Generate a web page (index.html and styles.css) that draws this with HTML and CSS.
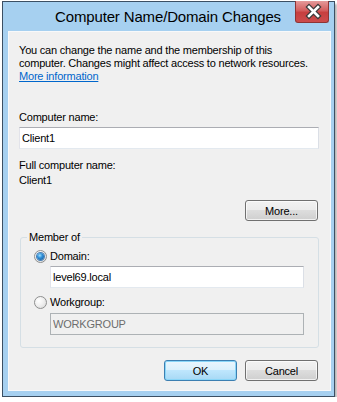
FILE: index.html
```html
<!DOCTYPE html>
<html lang="en">
<head>
  <meta charset="UTF-8" />
  <title>Computer Name/Domain Changes</title>
  <link rel="stylesheet" href="styles.css">
</head>
<body>

  <div class="window">
    <div class="titlebar">
      <span class="title">Computer Name/Domain Changes</span>
      <button class="close-btn" aria-label="Close">
        <svg width="34" height="21" viewBox="0 0 34 21">
          <path d="M13 6 L22 15 M22 6 L13 15" stroke="#3a3a3a" stroke-width="5" stroke-linecap="square" fill="none"/>
          <path d="M13 6 L22 15 M22 6 L13 15" stroke="#fff" stroke-width="2.6" stroke-linecap="square" fill="none"/>
        </svg>
      </button>
    </div>

    <div class="client">
      <p class="intro">
        You can change the name and the membership of this<br>
        computer. Changes might affect access to network resources.<br>
        <a href="#">More information</a>
      </p>

      <label class="field-label name-label">Computer name:</label>
      <input class="text-input" type="text" value="Client1" />

      <div class="field-label full-label">Full computer name:</div>
      <div class="field-label">Client1</div>

      <div class="more-row">
        <button class="btn">More...</button>
      </div>

      <fieldset class="member">
        <legend>Member of</legend>
        <label class="radio-row"><span class="radio checked"></span>Domain:</label>
        <input class="text-input indent" type="text" value="level69.local" />
        <label class="radio-row second"><span class="radio"></span>Workgroup:</label>
        <input class="text-input indent last" type="text" value="WORKGROUP" disabled />
      </fieldset>

      <div class="actions">
        <button class="btn btn-default">OK</button>
        <button class="btn">Cancel</button>
      </div>
    </div>
  </div>

</body>
</html>
```

FILE: styles.css
```css
* {
  box-sizing: border-box;
}

body {
  margin: 0;
  background-color: #fff;
  font-family: "Liberation Sans", Arial, sans-serif;
  font-size: 11px;
  letter-spacing: -0.2px;
  color: #000;
}

.window {
  width: 333px;
  height: 396px;
  margin: 1px 0 0 2px;
  border: 1px solid #3b4f63;
  background-color: #a6d0f0;
  padding: 0 3px 5px 5px;
  display: flex;
  flex-direction: column;
  box-shadow: 2px 3px 2px rgba(0, 0, 0, 0.3);
}

.titlebar {
  position: relative;
  height: 29px;
  flex: none;
  text-align: center;
  padding-right: 3px;
}

.title {
  font-size: 15px;
  letter-spacing: -0.15px;
  line-height: 30px;
}

.close-btn {
  position: absolute;
  top: -1px;
  right: 2px;
  width: 34px;
  height: 22px;
  padding: 0;
  border: 1px solid #8e3434;
  border-top: none;
  border-radius: 0 0 3px 3px;
  background: linear-gradient(#e49a9a 0%, #d45e5e 45%, #c73f3f 55%, #cc4c4c 100%);
}

.close-btn svg {
  display: block;
}

.client {
  flex: 1;
  background-color: #f0f0f0;
  border: 1px solid #f8f9fa;
  padding: 12px 11px 0 10px;
}

.intro {
  margin: 0;
  line-height: 13px;
}

.intro a {
  color: #0066cc;
}

.field-label {
  display: block;
  line-height: 15px;
}

.name-label {
  margin-top: 27px;
}

.full-label {
  margin-top: 9px;
}

.text-input {
  display: block;
  width: 100%;
  height: 22px;
  margin: 2px 0 0;
  padding: 0 2px;
  border: 1px solid;
  border-color: #abadb3 #dbdfe6 #e3e9ef #e2e3ea;
  background-color: #fff;
  font-family: inherit;
  font-size: inherit;
  letter-spacing: inherit;
  color: #000;
  outline: none;
}

.text-input:disabled {
  background-color: #f0f0f0;
  border-color: #adb2b5;
  color: #6d6d6d;
  -webkit-text-fill-color: #6d6d6d;
  opacity: 1;
}

.more-row,
.actions {
  display: flex;
  justify-content: flex-end;
  gap: 8px;
  padding-right: 1px;
}

.more-row {
  margin-top: 12px;
}

.actions {
  margin-top: 12px;
}

.btn {
  width: 73px;
  height: 21px;
  padding: 0;
  border: 1px solid #707070;
  border-radius: 3px;
  background: linear-gradient(#f2f2f2 0%, #ebebeb 50%, #dddddd 50%, #cfcfcf 100%);
  box-shadow: inset 0 0 0 1px rgba(255, 255, 255, 0.7);
  font-family: inherit;
  font-size: inherit;
  letter-spacing: inherit;
  color: #000;
}

.btn-default {
  border-color: #3c7fb1;
  background: linear-gradient(#eaf6fd 0%, #d9f0fc 50%, #bee6fd 50%, #a7d9f5 100%);
  box-shadow: inset 0 0 0 1px #8ad6f8;
}

.member {
  margin: 9px 0 0 1px;
  padding: 4px 14px 12px 13px;
  border: 1px solid #d5dfe5;
  border-radius: 3px;
}

.member legend {
  padding: 0 2px;
  margin-left: -7px;
  line-height: 15px;
}

.radio-row {
  display: flex;
  align-items: center;
  gap: 3px;
  line-height: 15px;
}

.radio-row.second {
  margin-top: 7px;
}

.radio {
  width: 13px;
  height: 13px;
  border-radius: 50%;
  border: 1px solid #8e8f8f;
  background: radial-gradient(circle at 35% 35%, #ffffff 0%, #f0f0f0 45%, #d4d4d4 100%);
  display: flex;
  align-items: center;
  justify-content: center;
}

.radio.checked::after {
  content: "";
  width: 7px;
  height: 7px;
  border-radius: 50%;
  background: radial-gradient(circle at 40% 35%, #9fe0ff 0%, #2f8fd8 40%, #0d4e8e 100%);
  box-shadow: 0 0 0 1px #4a7fb3;
}

.indent {
  width: calc(100% - 16px);
  margin-left: 16px;
}

.indent.last {
  margin-top: 3px;
}
```
